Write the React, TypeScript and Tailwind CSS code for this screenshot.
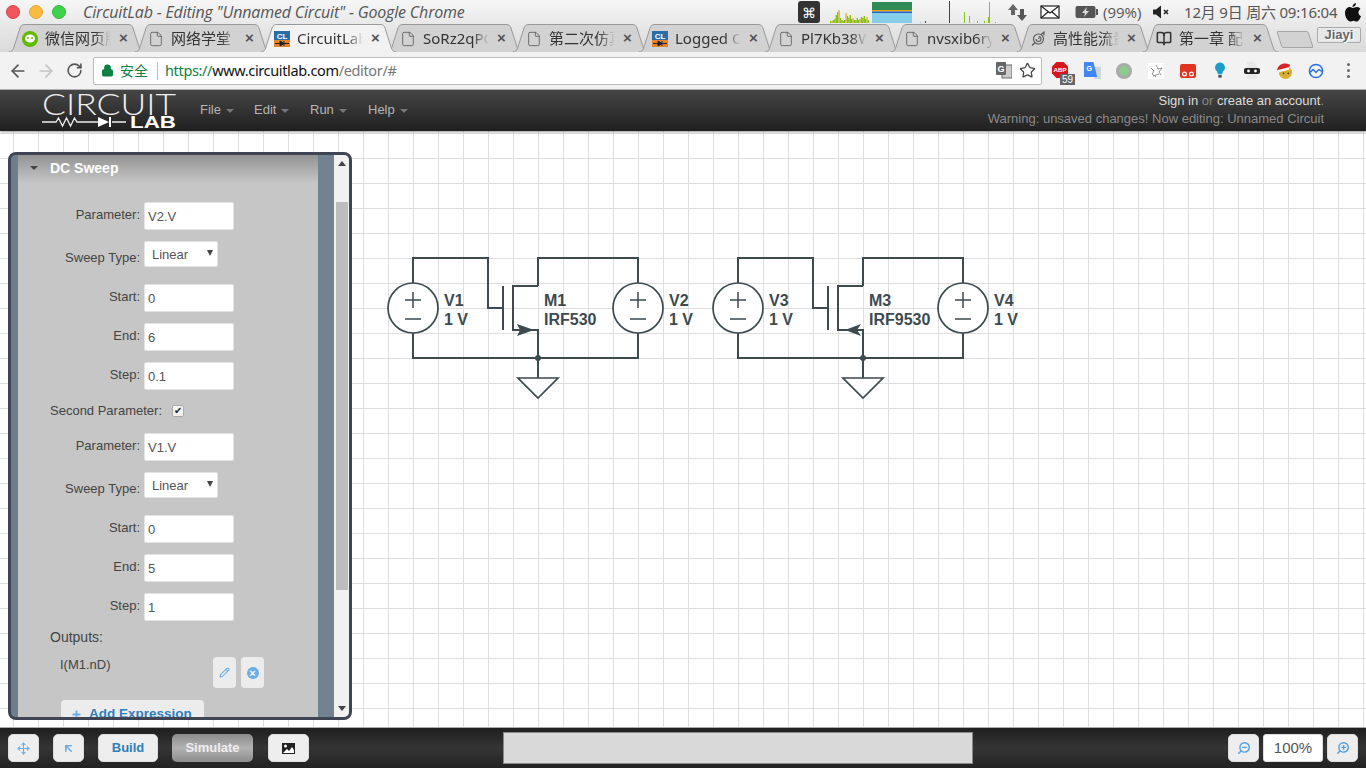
import { ArrowLeft, ArrowRight, ArrowUpLeft, BookOpen, File, Lock, Move, Pencil, Plus, RotateCw, Star, ZoomIn, ZoomOut } from "lucide-react";

const sans = "font-['Liberation_Sans',Arial,sans-serif]";

const tabs = [
  { title: "微信网页版", icon: "wechat" },
  { title: "网络学堂", icon: "file" },
  { title: "CircuitLab", icon: "cl", active: true },
  { title: "SoRz2qPC", icon: "file" },
  { title: "第二次仿真", icon: "file" },
  { title: "Logged O", icon: "cl" },
  { title: "Pl7Kb38W", icon: "file" },
  { title: "nvsxib6ry", icon: "file" },
  { title: "高性能流量", icon: "swirl" },
  { title: "第一章 配置", icon: "book" },
];

function CLIcon() {
  return (
    <svg width="16" height="16" viewBox="0 0 16 16">
      <rect width="16" height="9" fill="#2a6ea6" />
      <rect y="9" width="16" height="7" fill="#e8842c" />
      <text x="8" y="8" textAnchor="middle" fontSize="8" fontWeight="700" fill="#fff" fontFamily="Liberation Sans">CL</text>
      <path d="M1 12.500h5M10 12.500h5" stroke="#222" />
      <path d="M6 10v5l4-2.500zM10 10v5" fill="#222" stroke="#222" />
    </svg>
  );
}

function TabIcon({ kind }: { kind: string }) {
  if (kind === "cl") return <CLIcon />;
  if (kind === "wechat")
    return (
      <svg width="16" height="16" viewBox="0 0 16 16">
        <circle cx="8" cy="8" r="8" fill="#62b900" />
        <ellipse cx="8" cy="7.500" rx="5" ry="4" fill="#fff" />
        <circle cx="6" cy="7" r="0.900" fill="#62b900" />
        <circle cx="10" cy="7" r="0.900" fill="#62b900" />
      </svg>
    );
  if (kind === "swirl")
    return (
      <svg width="16" height="16" viewBox="0 0 16 16" fill="none" stroke="#555" strokeWidth="1.100">
        <circle cx="8.500" cy="8" r="5" />
        <path d="M8.500 5.500a2.500 2.500 0 1 1-2.500 2.500M8.500 8a1 1 0 0 1 1-1" />
        <path d="M2 14.500l3-3M11 3.500l3-2.500v3.500" />
      </svg>
    );
  if (kind === "book") return <BookOpen size={17} strokeWidth={2.300} color="#333" />;
  return <File size={16} strokeWidth={1.200} color="#555" />;
}

function Tab({ title, icon, active }: { title: string; icon: string; active?: boolean }) {
  return (
    <div className={`relative w-[137px] h-[28px] -ml-[11px] first:ml-0 shrink-0 ${active ? "z-10" : ""}`}>
      <svg className="absolute inset-0" width="137" height="28" viewBox="0 0 137 28">
        <path
          d="M0.500 28C4 28 5 26 6 23L12 4C13 1.500 14 0.500 17 0.500H120C123 0.500 124 1.500 125 4L131 23C132 26 133 28 136.500 28"
          fill={active ? "#f2f2f2" : "#d2d2d2"}
          stroke="#9a9a9a"
        />
      </svg>
      <div className="relative flex items-center h-full pl-[14px] pt-[1px]">
        <span className="w-4 h-4 flex items-center justify-center shrink-0">
          <TabIcon kind={icon} />
        </span>
        <span className="ml-[7px] w-[66px] overflow-hidden whitespace-nowrap text-[15px] text-[#333] font-['Noto_Sans','Noto_Sans_CJK_SC',sans-serif] [mask-image:linear-gradient(to_right,#000_75%,transparent)]">
          {title}
        </span>
        <span className={`ml-[8px] text-[#555] text-[15px] font-bold ${sans}`}>×</span>
      </div>
    </div>
  );
}

function Graphs() {
  const a = [2, 2, 3, 4, 8, 11, 13, 5, 3, 2, 3, 10, 7, 5, 8, 4, 5, 3, 3, 5, 3, 4, 6, 5, 7, 4, 6, 3];
  const c = [[134, 11], [139, 7], [147, 2], [154, 2], [158, 6], [159, 21], [165, 1]];
  return (
    <svg width="166" height="24" viewBox="0 0 166 24" className="block">
      {a.map((h, i) => (
        <rect key={i} x={i * 1.400} y={23 - h} width="1.400" height={h} fill={i % 5 === 1 ? "#e3b23c" : "#84c417"} />
      ))}
      <rect x="42" y="2" width="40" height="8" fill="#2e8b57" />
      <rect x="42" y="10" width="40" height="1.500" fill="#e8a000" />
      <rect x="42" y="11.500" width="40" height="1.500" fill="#1f5fd0" />
      <rect x="42" y="13" width="40" height="10" fill="#87ceeb" />
      <rect x="90" y="22" width="1" height="1" fill="#87ceeb" />
      <rect x="95" y="21" width="1" height="2" fill="#1d3fd0" />
      <rect x="119" y="1" width="1" height="22" fill="#1d3fd0" />
      {c.map(([x, h]) => (
        <rect key={x} x={x} y={23 - h} width="1" height={h} fill="#84c417" />
      ))}
    </svg>
  );
}

function TitleBar() {
  return (
    <div className="h-6 flex items-center shrink-0 pl-[6px] relative z-20">
      <span className="w-[14px] h-[14px] rounded-full bg-[#f2545b] border border-[#d9434a]" />
      <span className="w-[14px] h-[14px] rounded-full bg-[#fcbc40] border border-[#e0a52e] ml-[9px]" />
      <span className="w-[14px] h-[14px] rounded-full bg-[#3ed24c] border border-[#2fb93c] ml-[9px]" />
      <span className="ml-[17px] w-[715px] text-[16px] italic text-[#555] whitespace-nowrap font-['Open_Sans',sans-serif] tracking-[-0.18px]">
        CircuitLab - Editing "Unnamed Circuit" - Google Chrome
      </span>
      <span className="w-[22px] h-[22px] rounded-[3px] bg-[#333] text-white text-[14px] flex items-center justify-center">⌘</span>
      <span className="ml-[10px]">
        <Graphs />
      </span>
      <svg className="ml-[11px]" width="22" height="20" viewBox="0 0 22 20" fill="#666">
        <path d="M1 8l5-6 5 6H8v5H4V8z" />
        <path d="M10 13l5 6 5-6h-3V7h-4v6z" fill="#555" />
      </svg>
      <svg className="ml-[11px]" width="20" height="16" viewBox="0 0 20 16" fill="#fff" stroke="#222" strokeWidth="1.200">
        <rect x="1" y="2" width="18" height="12" />
        <path d="M1 2l9 7 9-7M1 14l7-6M19 14l-7-6" fill="none" />
      </svg>
      <svg className="ml-[15px]" width="23" height="14" viewBox="0 0 23 14">
        <rect x="0.500" y="1" width="20" height="12" rx="2" fill="#555" />
        <rect x="21" y="4" width="2" height="6" fill="#555" />
        <path d="M12 2l-5 6h3l-1 4 5-6h-3z" fill="#ddd" />
      </svg>
      <span className="ml-[5px] w-[44px] text-[15px] text-[#555] whitespace-nowrap font-['Open_Sans',sans-serif]">(99%)</span>
      <svg className="ml-[6px]" width="18" height="14" viewBox="0 0 18 14" fill="#222">
        <path d="M0 4.500h3l5-4v13l-5-4H0z" />
        <path d="M11 5l4 4M15 5l-4 4" stroke="#222" strokeWidth="1.500" />
      </svg>
      <span className="ml-[13px] w-[152px] text-[15px] text-[#555] whitespace-nowrap font-['Noto_Sans','Noto_Sans_CJK_SC',sans-serif] tracking-[-0.2px]">
        12月 9日 周六 09:16:04
      </span>
      <svg className="ml-[9px]" width="16" height="19" viewBox="0 0 16 19" fill="#111">
        <path d="M11 0c.2 2-1.600 4-3.500 3.900C7.400 2 9.200.2 11 0zM8 5c1 0 2-1 4-1 1.500 0 2.800.8 3.500 2-3 1.800-2.500 6 .5 7.200-.8 2.200-2.500 5.300-4.300 5.300-1.200 0-1.800-.8-3.200-.8s-2 .8-3.200.8C2.800 18.500 0 14 0 10c0-3.600 2.300-6 4.700-6C6 4 7.200 5 8 5z" />
      </svg>
    </div>
  );
}

function TabStrip() {
  return (
    <div className="h-[28px] flex items-end shrink-0 pl-[8px] relative">
      {tabs.map((t) => (
        <Tab key={t.title} title={t.title} icon={t.icon} active={t.active} />
      ))}
      <span className="mb-[4px] w-[32px] h-[17px] bg-[#d2d2d2] border border-[#a5a5a5] rounded-[2px] skew-x-[18deg]" />
      <span className="ml-[6px] mb-[9px] w-[44px] h-[16px] bg-[#e8e8e8] border border-[#aaa] rounded-[2px] text-[13px] text-[#666] text-center leading-[14px] font-bold font-['Liberation_Sans',sans-serif] [text-shadow:1px_1px_0_#fff]">
        Jiayi
      </span>
    </div>
  );
}

function ExtIcons() {
  return (
    <div className="flex items-center ml-[2px]">
      <span className="w-8 h-6 flex items-center justify-center relative">
        <svg width="16" height="16" viewBox="0 0 18 18" className="-mt-[2px]">
          <path d="M5 0h8l5 5v8l-5 5H5l-5-5V5z" fill="#d8141c" />
          <text x="9" y="11" textAnchor="middle" fontSize="7" fontWeight="700" fill="#fff" fontFamily="Liberation Sans">ABP</text>
        </svg>
        <span className={`absolute right-[1px] bottom-[-2px] w-[15px] h-[11px] bg-[#666] text-white text-[10px] leading-[11px] text-center ${sans}`}>59</span>
      </span>
      <span className="w-8 h-6 flex items-center justify-center">
        <svg width="17" height="17" viewBox="0 0 18 18">
          <path d="M9 5h9v13h-7z" fill="#cfd6dc" />
          <path d="M0 0h10l4 16H0z" fill="#4285f4" />
          <text x="5.500" y="10" textAnchor="middle" fontSize="8" fontWeight="700" fill="#fff" fontFamily="Liberation Sans">G</text>
        </svg>
      </span>
      <span className="w-8 h-6 flex items-center justify-center">
        <span className="w-4 h-4 rounded-full bg-[#8ecb8e] border-[3px] border-[#aaa]" />
      </span>
      <span className="w-8 h-6 flex items-center justify-center">
        <svg width="16" height="16" viewBox="0 0 16 16" fill="none" stroke="#777" strokeWidth="0.800">
          <rect width="16" height="16" fill="#fff" stroke="none" />
          <path d="M3 5l3 3-2 3 4 3M8 2l2 4 4-1-3 4 2 3M5 13l6-2" />
        </svg>
      </span>
      <span className="w-8 h-6 flex items-center justify-center">
        <svg width="16" height="14" viewBox="0 0 16 14">
          <rect width="16" height="14" rx="2" fill="#e1341e" />
          <circle cx="4.500" cy="10" r="2.500" fill="#fff" />
          <circle cx="11.500" cy="10" r="2.500" fill="#fff" />
          <circle cx="4.500" cy="10" r="1.300" fill="#e1341e" />
          <circle cx="11.500" cy="10" r="1.300" fill="#e1341e" />
        </svg>
      </span>
      <span className="w-8 h-6 flex items-center justify-center">
        <svg width="10" height="17" viewBox="0 0 12 19">
          <path d="M6 0a6 6 0 0 1 3.500 10.800L8.500 14h-5L2.500 10.800A6 6 0 0 1 6 0z" fill="#1c9dc9" />
          <rect x="4" y="15" width="4" height="3" fill="#444" />
        </svg>
      </span>
      <span className="w-8 h-6 flex items-center justify-center">
        <svg width="16" height="17" viewBox="0 0 16 17">
          <path d="M3 0h7l3 3v14H3z" fill="#e8e8e8" />
          <rect x="0" y="6" width="16" height="6" rx="2" fill="#222" />
          <circle cx="4.500" cy="9" r="1.400" fill="#fff" />
          <circle cx="11.500" cy="9" r="1.400" fill="#fff" />
        </svg>
      </span>
      <span className="w-8 h-6 flex items-center justify-center">
        <svg width="17" height="17" viewBox="0 0 18 18">
          <circle cx="10" cy="11" r="7" fill="#d9b02e" />
          <path d="M1 9C2 2 9 0 15 3l-2 4z" fill="#d8232a" />
          <rect x="1" y="7" width="13" height="2.500" fill="#fff" transform="rotate(-15 8 8)" />
          <circle cx="8" cy="12" r="1" fill="#444" />
          <circle cx="13" cy="12" r="1" fill="#444" />
        </svg>
      </span>
      <span className="w-8 h-6 flex items-center justify-center">
        <svg width="16" height="16" viewBox="0 0 17 17" fill="none" stroke="#2d6fe0" strokeWidth="1.600">
          <circle cx="8.500" cy="8.500" r="7" />
          <path d="M2 10l3.500-3 3 3 3-3 3.500 2" />
        </svg>
      </span>
      <span className="w-8 h-6 flex flex-col items-center justify-center gap-[3px]">
        <span className="w-[3px] h-[3px] rounded-full bg-[#666]" />
        <span className="w-[3px] h-[3px] rounded-full bg-[#666]" />
        <span className="w-[3px] h-[3px] rounded-full bg-[#666]" />
      </span>
    </div>
  );
}

function Toolbar() {
  return (
    <div className="h-[38px] shrink-0 bg-[#f2f2f2] flex items-center pl-[8px] border-b border-[#b5b5b5]">
      <ArrowLeft size={20} strokeWidth={2} color="#555" />
      <ArrowRight size={20} strokeWidth={2} color="#c4c4c4" className="ml-[8px]" />
      <RotateCw size={17} strokeWidth={2.200} color="#555" className="ml-[10px]" />
      <div className="ml-[10px] w-[949px] h-[28px] bg-white border border-[#bbb] rounded-[2px] flex items-center pl-[7px]">
        <Lock size={13} fill="#0b8043" color="#0b8043" strokeWidth={2.200} />
        <span className="ml-[6px] text-[14px] text-[#0b8043] font-['Noto_Sans_CJK_SC',sans-serif]">安全</span>
        <span className="ml-[9px] w-px h-[18px] bg-[#bbb]" />
        <span className="ml-[7px] text-[14.5px] font-['Noto_Sans',sans-serif] tracking-[-0.35px] whitespace-nowrap">
          <span className="text-[#0b8043]">https://</span>
          <span className="text-[#111]">www.circuitlab.com</span>
          <span className="text-[#777]">/editor/#</span>
        </span>
        <span className="ml-auto flex items-center gap-[7px] pr-[5px]">
          <svg width="16" height="17" viewBox="0 0 16 17">
            <rect x="6" y="3" width="10" height="13" fill="#ccc" stroke="#666" />
            <rect x="0" y="0" width="10" height="13" rx="1" fill="#666" />
            <text x="5" y="10" textAnchor="middle" fontSize="9" fontWeight="700" fill="#fff" fontFamily="Liberation Sans">G</text>
          </svg>
          <Star size={17} strokeWidth={1.800} color="#444" />
        </span>
      </div>
      <ExtIcons />
    </div>
  );
}

function Logo() {
  return (
    <svg width="136" height="36" viewBox="0 0 136 36" className="block overflow-visible">
      <text x="0" y="23" fontSize="29" fill="#eee" fontWeight="300" fontFamily="Lato, Open Sans, sans-serif" textLength="134" lengthAdjust="spacingAndGlyphs">CIRCUIT</text>
      <path d="M0 30h14l2.500-4 4 8 4-8 4 8 4-8 2.500 4h22M70 30h14" fill="none" stroke="#eee" strokeWidth="1.300" />
      <path d="M56 25v10l11-5z" fill="#fff" />
      <path d="M68 25v10" stroke="#fff" strokeWidth="2" />
      <text x="88" y="36" fontSize="17" fontWeight="700" fill="#fff" fontFamily="Liberation Sans" textLength="46" lengthAdjust="spacingAndGlyphs">LAB</text>
    </svg>
  );
}

function MenuItem({ label, width }: { label: string; width: string }) {
  return (
    <span className={`${width} flex items-center text-[13px] text-[#b5b5b5] whitespace-nowrap`}>
      {label}
      <span className="ml-[5px] mt-[3px] border-x-[4px] border-x-transparent border-t-[4px] border-t-[#777]" />
    </span>
  );
}

function Header() {
  return (
    <div className={`h-[41px] shrink-0 bg-linear-to-b from-[#464646] to-[#202020] flex items-center pl-[42px] pr-[42px] pb-[2px] ${sans} relative z-10 shadow-[0_1px_2px_rgba(0,0,0,0.4)]`}>
      <div className="w-[158px]">
        <Logo />
      </div>
      <MenuItem label="File" width="w-[54px]" />
      <MenuItem label="Edit" width="w-[56px]" />
      <MenuItem label="Run" width="w-[58px]" />
      <MenuItem label="Help" width="w-[60px]" />
      <div className="ml-auto text-right text-[13px] leading-[18px]">
        <div className="text-[#888]">
          <span className="text-[#ddd]">Sign in</span> or <span className="text-[#ddd]">create an account</span>.
        </div>
        <div className="text-[#8a8a8a]">Warning: unsaved changes! Now editing: Unnamed Circuit</div>
      </div>
    </div>
  );
}

function Field({ label, value }: { label: string; value: string }) {
  return (
    <div className="flex items-start h-[28px] mb-[11px]">
      <label className="w-[122px] text-right text-[13px] leading-[15px] text-[#444] pt-[5px]">{label}</label>
      <input
        readOnly
        value={value}
        className="ml-[4px] w-[90px] h-[28px] bg-white rounded-[2px] pl-[3px] pt-[1px] text-[13px] text-[#555] outline-none border border-[#e4e4e4]"
      />
    </div>
  );
}

function SelectField() {
  return (
    <div className="flex items-start h-[26px] mb-[17px]">
      <label className="w-[122px] text-right text-[13px] leading-[15px] text-[#444] pt-[9px]">Sweep Type:</label>
      <div className="ml-[4px] w-[74px] h-[26px] bg-white rounded-[2px] border border-[#e4e4e4] flex items-center pl-[7px] pt-[1px] text-[13px] text-[#555]">
        Linear
        <span className="ml-auto mr-[4px] -mt-[3px] border-x-[3.500px] border-x-transparent border-t-[6px] border-t-[#444]" />
      </div>
    </div>
  );
}

function SweepGroup({ param, end, step }: { param: string; end: string; step: string }) {
  return (
    <>
      <Field label="Parameter:" value={param} />
      <SelectField />
      <Field label="Start:" value="0" />
      <Field label="End:" value={end} />
      <Field label="Step:" value={step} />
    </>
  );
}

function Panel() {
  return (
    <div className={`absolute left-[8px] top-[21px] w-[344px] h-[568px] border-[3px] border-[#3f4555] rounded-[8px] overflow-hidden flex bg-[#738290] ${sans} z-10`}>
      <div className="w-[7px] shrink-0 bg-[#6f7e8c]" />
      <div className="w-[300px] shrink-0 bg-[#c6c6c6] overflow-hidden">
        <div className="h-[28px] pb-[2px] bg-linear-to-b from-[#939393] to-[#c6c6c6] flex items-center pl-[12px] text-white font-bold text-[14px]">
          <span className="border-x-[4px] border-x-transparent border-t-[4px] border-t-[#444] mr-[12px]" />
          DC Sweep
        </div>
        <div className="pt-[19px]">
          <SweepGroup param="V2.V" end="6" step="0.1" />
          <div className="h-[20px] mb-[12px] flex items-center pl-[32px] text-[13px] text-[#444]">
            Second Parameter:
            <span className="ml-[10px] w-[12px] h-[12px] bg-[#f4f4f4] border border-[#aaa] rounded-[2px] flex items-center justify-center text-[10px] leading-none text-[#222]">✔</span>
          </div>
          <SweepGroup param="V1.V" end="5" step="1" />
          <div className="-mt-[3px] pl-[32px] text-[14px] leading-[16px] text-[#444]">Outputs:</div>
          <div className="mt-[12px] flex items-start">
            <span className="ml-[42px] w-[153px] text-[13px] leading-[15px] text-[#444]">I(M1.nD)</span>
            <span className="w-[23px] h-[31px] bg-[#ececec] rounded-[4px] flex items-center justify-center">
              <Pencil size={11} color="#6aaee6" strokeWidth={2.200} />
            </span>
            <span className="ml-[5px] w-[23px] h-[31px] bg-[#ececec] rounded-[4px] flex items-center justify-center">
              <span className="w-[12px] h-[12px] rounded-full bg-[#6aaee6] text-white text-[11px] leading-[12px] text-center font-bold">×</span>
            </span>
          </div>
          <div className="mt-[12px] ml-[43px] w-[143px] h-[28px] bg-[#ececec] rounded-[4px] flex items-center pl-[10px] text-[13.5px] font-bold text-[#2f7fbd]">
            <Plus size={11} strokeWidth={4} color="#6aaee6" className="mr-[7px]" />
            Add Expression
          </div>
        </div>
      </div>
      <div className="w-[16px] shrink-0 bg-[#738290]" />
      <div className="flex-1 bg-[#f1f1f1] flex flex-col items-center">
        <span className="mt-[6px] border-x-[4px] border-x-transparent border-b-[5px] border-b-[#444]" />
        <span className="mt-[36px] w-[12px] h-[388px] bg-[#bdbdbd]" />
        <span className="mt-auto mb-[6px] border-x-[4px] border-x-transparent border-t-[5px] border-t-[#444]" />
      </div>
    </div>
  );
}

function Source({ cx, cy, name }: { cx: number; cy: number; name: string }) {
  return (
    <g>
      <circle cx={cx} cy={cy} r="25" fill="#fff" stroke="#3d4a4f" strokeWidth="1.700" />
      <path d={`M${cx - 8} ${cy - 8}h16M${cx} ${cy - 16}v16M${cx - 8} ${cy + 11}h16`} stroke="#3d4a4f" strokeWidth="1.500" fill="none" />
      <text x={cx + 31} y={cy - 2} fontWeight="700" fontSize="16" fill="#3d4a4f" fontFamily="Liberation Sans">{name}</text>
      <text x={cx + 31} y={cy + 17} fontWeight="700" fontSize="16" fill="#3d4a4f" fontFamily="Liberation Sans">1 V</text>
    </g>
  );
}

function Stage({ dx, v1, v2, name, model, pmos }: { dx: number; v1: string; v2: string; name: string; model: string; pmos?: boolean }) {
  return (
    <g transform={`translate(${dx} 0)`}>
      <path
        d="M413 283V258H488V308H503M538 286V258H638V283M638 333V358H413V333M538 358V330H513V286H538M538 358V378"
        fill="none"
        stroke="#3d4a4f"
        strokeWidth="2"
      />
      <path d="M503 286V330" stroke="#3d4a4f" strokeWidth="2" />
      {pmos ? (
        <path d="M520 330L536 324L532 330L536 336Z" fill="#3d4a4f" />
      ) : (
        <path d="M534 330L517 324L520 330L517 336Z" fill="#3d4a4f" />
      )}
      <circle cx="538" cy="358" r="3" fill="#3d4a4f" />
      <path d="M518 378H558L538 398Z" fill="#fff" stroke="#3d4a4f" strokeWidth="1.700" />
      <Source cx={413} cy={308} name={v1} />
      <Source cx={638} cy={308} name={v2} />
      <text x="544" y="306" fontSize="16" fontWeight="700" fill="#3d4a4f" fontFamily="Liberation Sans">{name}</text>
      <text x="544" y="325" fontSize="16" fontWeight="700" fill="#3d4a4f" fontFamily="Liberation Sans">{model}</text>
    </g>
  );
}

function Canvas() {
  return (
    <div className="flex-1 relative overflow-hidden bg-white bg-[linear-gradient(to_right,#dedede_1px,transparent_1px),linear-gradient(to_bottom,#dedede_1px,transparent_1px)] bg-[size:25px_25px] bg-[position:13px_2px]">
      <svg className="absolute left-0 top-[-131px]" width="1366" height="768" viewBox="0 0 1366 768">
        <Stage dx={0} v1="V1" v2="V2" name="M1" model="IRF530" />
        <Stage dx={325} v1="V3" v2="V4" name="M3" model="IRF9530" pmos />
      </svg>
      <Panel />
    </div>
  );
}

function BarButton({ className, children }: { className?: string; children: React.ReactNode }) {
  return (
    <span className={`h-[28px] bg-[#eeeeee] border border-[#ddd] rounded-[5px] flex items-center justify-center shrink-0 ${className ?? ""}`}>
      {children}
    </span>
  );
}

function BottomBar() {
  return (
    <div className={`h-[41px] shrink-0 bg-linear-to-b from-[#1f1f1f] via-[#353535] to-[#222] flex items-center pl-[8px] border-t border-[#aaa] ${sans}`}>
      <BarButton className="w-[31px]">
        <Move size={13} color="#6aaee6" strokeWidth={2} />
      </BarButton>
      <BarButton className="w-[31px] ml-[14px]">
        <ArrowUpLeft size={13} color="#6aaee6" strokeWidth={3} />
      </BarButton>
      <BarButton className="w-[60px] ml-[14px] text-[13px] font-bold text-[#2f7fbd]">Build</BarButton>
      <span className="w-[81px] h-[28px] ml-[14px] rounded-[5px] bg-linear-to-b from-[#8c8c8c] via-[#b2b2b2] to-[#8c8c8c] text-[#eee] text-[13px] font-bold flex items-center justify-center">
        Simulate
      </span>
      <BarButton className="w-[41px] ml-[15px]">
        <svg width="13" height="11" viewBox="0 0 13 11">
          <rect width="13" height="11" fill="#222" />
          <circle cx="3.500" cy="3" r="1.500" fill="#fff" />
          <path d="M1 10l4-4 2 2 3-4 2 3v3z" fill="#fff" />
        </svg>
      </BarButton>
      <span className="ml-[194px] w-[470px] h-[32px] bg-[#d9d9d9] border border-[#888]" />
      <BarButton className="w-[31px] ml-[255px]">
        <ZoomOut size={14} color="#4f9fe6" strokeWidth={2.400} className="-scale-x-100" />
      </BarButton>
      <span className="ml-[4px] w-[60px] h-[28px] bg-white border border-[#ddd] rounded-[3px] text-[15px] text-[#555] flex items-center justify-center">100%</span>
      <BarButton className="w-[31px] ml-[4px]">
        <ZoomIn size={14} color="#4f9fe6" strokeWidth={2.400} className="-scale-x-100" />
      </BarButton>
    </div>
  );
}

export default function App() {
  return (
    <div className="w-[1366px] h-[768px] overflow-hidden flex flex-col bg-linear-to-b from-[#f6f6f6] to-[#dadada] to-[52px]">
      <TitleBar />
      <TabStrip />
      <Toolbar />
      <Header />
      <Canvas />
      <BottomBar />
    </div>
  );
}
